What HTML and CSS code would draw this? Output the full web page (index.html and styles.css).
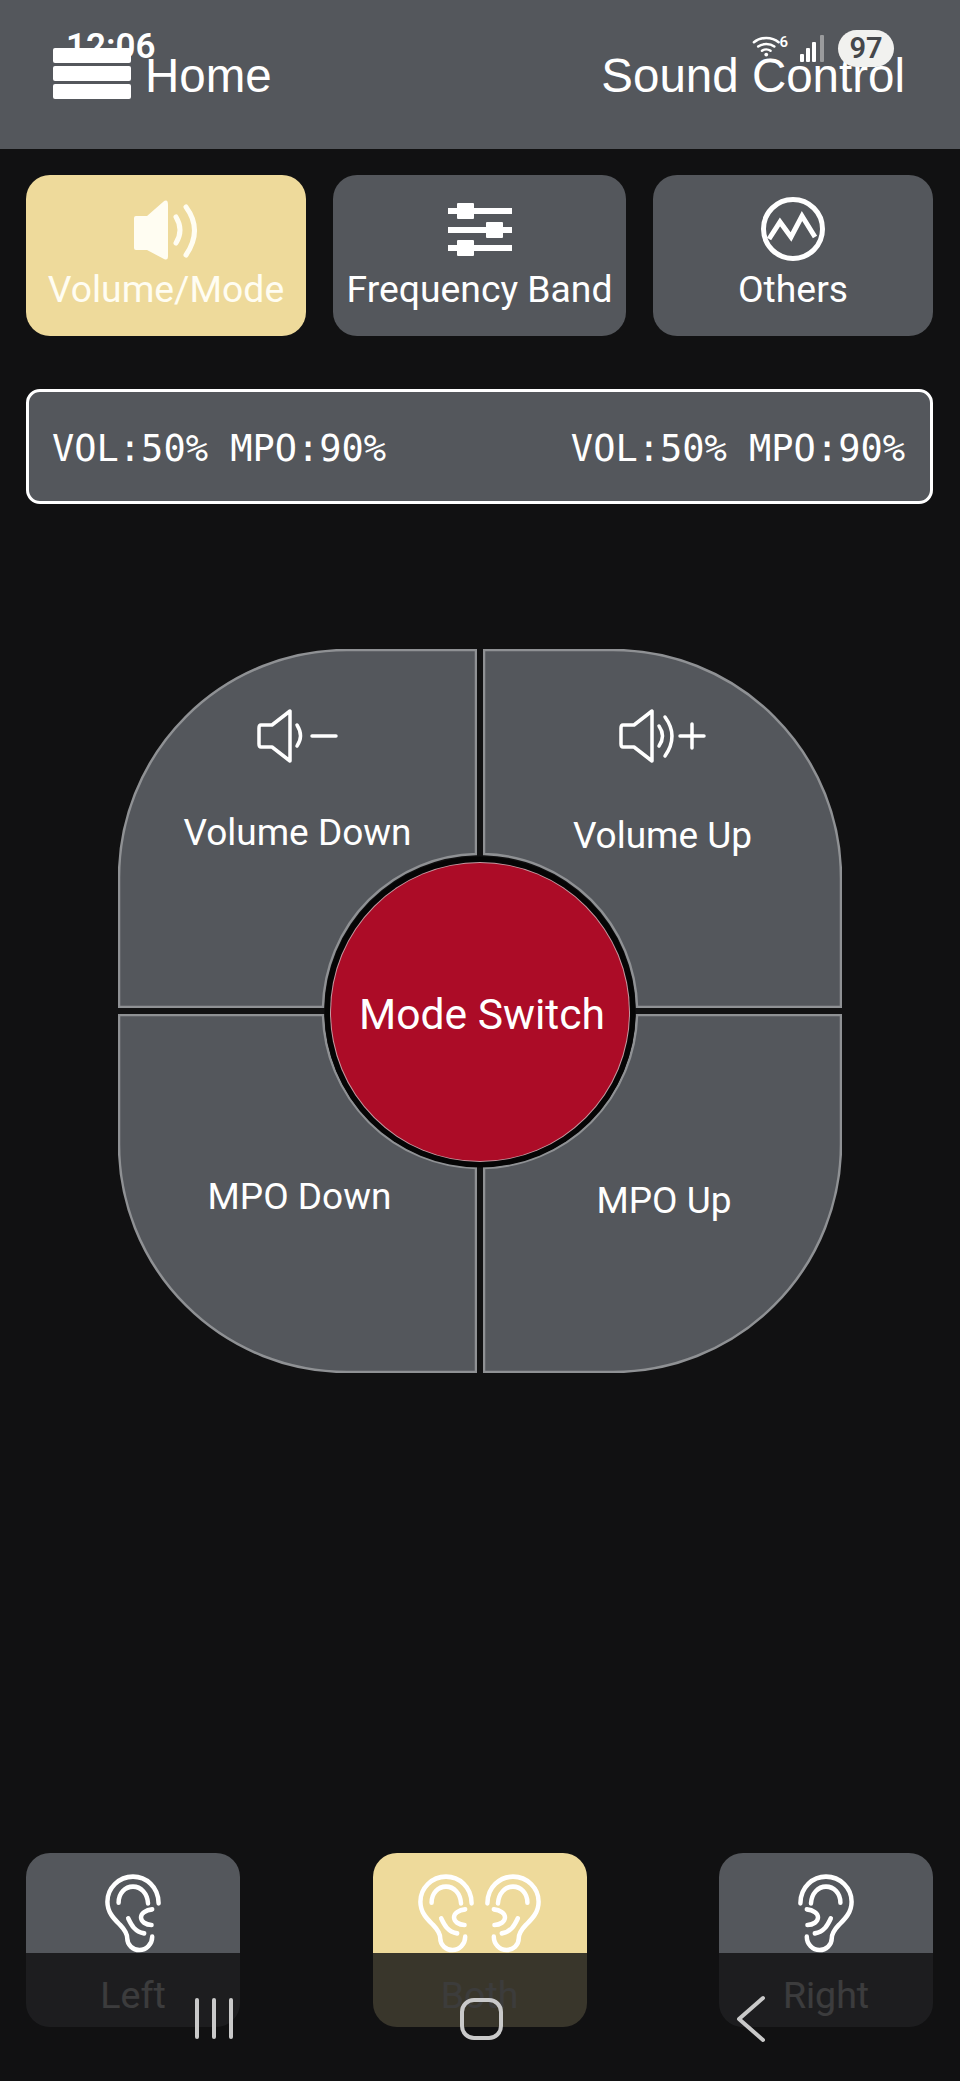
FILE: index.html
```html
<!DOCTYPE html>
<html lang="en">
<head>
<meta charset="utf-8">
<title>Sound Control</title>
<link rel="stylesheet" href="styles.css">
</head>
<body>
<svg class="defs" width="0" height="0" aria-hidden="true">
  <defs>
    <g id="ear" transform="translate(5.200 0) scale(.96 1)">
      <path d="M210 100C210 50 170 20 130 20C85 20 50 55 50 95C50 130 75 150 90 165C105 180 112 190 112 205C112 225 130 240 150 240C172 240 190 222 190 200"/>
      <path d="M85 98C85 70 105 50 130 50C155 50 175 70 177 100"/>
      <path d="M190 118C170 120 155 130 155 142C155 155 170 165 188 165"/>
      <path d="M115 145C125 165 135 185 165 190"/>
    </g>
    <path id="quad" d="M1 358V229A228 228 0 0 1 229 1H358V205A157 157 0 0 0 205 358Z"/>
  </defs>
</svg>

<div class="statusbar">
  <span class="time">12:06</span>
  <div class="status-icons">
    <div class="wifi">
      <svg class="wifi-svg" viewBox="0 0 32 28" width="32" height="28">
        <path d="M2 9C9 3 21 3 28 9M6.500 13.500C11 10 19 10 23.500 13.500M10.500 18C13 16.200 17 16.200 19.500 18"/>
        <circle cx="15" cy="22" r="2"/>
      </svg>
      <span class="wifi-six">6</span>
    </div>
    <svg class="signal" viewBox="0 0 26 27" width="26" height="27">
      <rect x="0" y="19" width="4" height="8" rx="1"/>
      <rect x="6" y="13" width="4" height="14" rx="1"/>
      <rect x="12" y="7" width="4" height="20" rx="1"/>
      <rect class="signal-off" x="20" y="0" width="4" height="27" rx="1"/>
    </svg>
    <span class="battery">97</span>
  </div>
</div>

<header class="appbar">
  <div class="appbar-left">
    <div class="hamburger"><i></i><i></i><i></i></div>
    <span class="appbar-title">Home</span>
  </div>
  <span class="appbar-title">Sound Control</span>
</header>

<main class="content">
  <nav class="tabs">
    <button class="tab tab-a is-active">
      <svg class="tab-icon" viewBox="0 0 70 70" width="70" height="70">
        <path class="solid" d="M5 21Q3 21 3 23V53Q3 55 5 55H16L33 64Q37 66 37 61V10Q37 3 32 7L16 21Z"/>
        <path class="arc" d="M45 22Q53 35 45 48M55 12Q72 35 55 60"/>
      </svg>
      <span class="tab-label">Volume/Mode</span>
    </button>
    <button class="tab tab-b">
      <svg class="tab-icon" viewBox="0 0 70 70" width="70" height="70">
        <rect class="solid" x="3" y="13" width="64" height="6"/>
        <rect class="solid" x="3" y="32" width="64" height="6"/>
        <rect class="solid" x="3" y="50" width="64" height="6"/>
        <rect class="solid" x="12" y="8" width="17" height="16" rx="1"/>
        <rect class="solid" x="41" y="27" width="17" height="16" rx="1"/>
        <rect class="solid" x="12" y="45" width="17" height="16" rx="1"/>
      </svg>
      <span class="tab-label">Frequency Band</span>
    </button>
    <button class="tab tab-a">
      <svg class="tab-icon" viewBox="0 0 70 70" width="70" height="70">
        <circle class="line5" cx="35" cy="34" r="29.500"/>
        <path class="line5" d="M11 44L22 27L33 42L44 21L57 42"/>
      </svg>
      <span class="tab-label">Others</span>
    </button>
  </nav>

  <section class="readout">
    <span>VOL:50% MPO:90%</span>
    <span>VOL:50% MPO:90%</span>
  </section>

  <section class="pad">
    <button class="quad quad-tl">
      <svg class="quad-bg" viewBox="0 0 359 359"><use href="#quad"/></svg>
      <svg class="vol-icon" viewBox="0 0 90 60" width="90" height="60">
        <path class="line3" d="M8 19H19L37 5V55L19 41H8Q6 41 6 38V22Q6 19 8 19Z"/>
        <path class="line3" d="M44 19Q51 30 44 40"/>
        <path class="line3" d="M59 30H83"/>
      </svg>
      <span class="quad-label">Volume Down</span>
    </button>
    <button class="quad quad-tr">
      <svg class="quad-bg" viewBox="0 0 359 359"><use href="#quad"/></svg>
      <svg class="vol-icon" viewBox="0 0 90 60" width="90" height="60">
        <path class="line3" d="M5 19H16L34 5V55L16 41H5Q3 41 3 38V22Q3 19 5 19Z"/>
        <path class="line3" d="M41 20Q48 30 41 40M47 11Q61 30 47 50"/>
        <path class="line3" d="M62 30H86M74 18V42"/>
      </svg>
      <span class="quad-label">Volume Up</span>
    </button>
    <button class="quad quad-bl">
      <svg class="quad-bg" viewBox="0 0 359 359"><use href="#quad"/></svg>
      <span class="quad-label">MPO Down</span>
    </button>
    <button class="quad quad-br">
      <svg class="quad-bg" viewBox="0 0 359 359"><use href="#quad"/></svg>
      <span class="quad-label">MPO Up</span>
    </button>
    <button class="mode">Mode Switch</button>
  </section>

  <section class="ears">
    <button class="ear-btn">
      <svg class="ear" viewBox="40 0 180 270"><use href="#ear"/></svg>
      <span class="ear-label">Left</span>
    </button>
    <button class="ear-btn is-active">
      <span class="ear-pair">
        <svg class="ear" viewBox="40 0 180 270"><use href="#ear"/></svg>
        <svg class="ear ear-flip" viewBox="40 0 180 270"><use href="#ear"/></svg>
      </span>
      <span class="ear-label">Both</span>
    </button>
    <button class="ear-btn">
      <svg class="ear ear-flip" viewBox="40 0 180 270"><use href="#ear"/></svg>
      <span class="ear-label">Right</span>
    </button>
  </section>
</main>

<div class="navbar">
  <span class="nav-recents"><i></i><i></i><i></i></span>
  <span class="nav-home"></span>
  <svg class="nav-back" viewBox="0 0 32 48" width="32" height="48"><path d="M28 3L4 24L28 45"/></svg>
</div>
</body>
</html>
```

FILE: styles.css
```css
* { box-sizing: border-box; }

html, body {
  margin: 0;
  padding: 0;
  height: 2081px;
  overflow: hidden;
  background: #111112;
  color: #fff;
  font-family: Roboto, "Liberation Sans", sans-serif;
}

button {
  border: 0;
  padding: 0;
  margin: 0;
  color: inherit;
  font: inherit;
  background: none;
}

.defs { position: absolute; }

/* System status bar, drawn over the app bar */
.statusbar {
  position: absolute;
  z-index: 1;
  top: 0;
  left: 0;
  width: 960px;
  height: 70px;
  padding: 30px 66px 0 66px;
  display: flex;
  justify-content: space-between;
  align-items: flex-start;
}

.time {
  font-size: 35px;
  font-weight: 600;
  line-height: 34px;
}

.status-icons {
  display: flex;
  align-items: flex-start;
  gap: 12px;
}

.wifi {
  display: flex;
  align-items: flex-start;
  margin-top: 3px;
  width: 36px;
}

.wifi-svg path {
  fill: none;
  stroke: #fff;
  stroke-width: 2.600;
  stroke-linecap: round;
}

.wifi-svg circle { fill: #fff; }

.wifi-six {
  margin-left: -3px;
  margin-top: 1px;
  font-size: 15px;
  font-weight: 600;
  line-height: 16px;
}

.signal {
  margin-top: 5px;
  margin-left: 0;
  fill: #fff;
}

.signal-off { fill: #9a9b9d; }

.battery {
  width: 56px;
  height: 37px;
  border-radius: 19px;
  background: #f1f1ef;
  color: #45474b;
  font-size: 29px;
  font-weight: 600;
  line-height: 37px;
  text-align: center;
}

/* App bar */
.appbar {
  height: 149px;
  padding: 48px 55px 0 53px;
  background: #54575c;
  display: flex;
  justify-content: space-between;
  align-items: flex-start;
}

.appbar-left {
  display: flex;
  align-items: flex-start;
  gap: 14px;
}

.hamburger {
  position: relative;
  z-index: 2;
  width: 78px;
  display: flex;
  flex-direction: column;
  gap: 3px;
}

.hamburger i {
  display: block;
  height: 15px;
  border-radius: 2px;
  background: #fff;
}

.appbar-title {
  font-family: "Liberation Sans", Arial, sans-serif;
  font-size: 47.500px;
  line-height: 55px;
}

/* Content */
.content { padding: 26px 27px 0 26px; }

.tabs {
  display: grid;
  grid-template-columns: 280px 293px 280px;
  gap: 27px;
}

.tab {
  height: 161px;
  padding-top: 20px;
  border-radius: 24px;
  background: #54575c;
  display: flex;
  flex-direction: column;
  align-items: center;
}

.tab.is-active { background: #eeda9b; color: #fffdf2; }

.tab-icon { flex: none; }

.tab-label {
  margin-top: 2px;
  font-size: 37.300px;
  line-height: 44px;
  white-space: nowrap;
}

.solid { fill: currentColor; }

.arc {
  fill: none;
  stroke: currentColor;
  stroke-width: 5;
  stroke-linecap: round;
}

.line5 {
  fill: none;
  stroke: #fff;
  stroke-width: 5;
}

.readout {
  height: 115px;
  margin-top: 53px;
  padding: 5px 25px 0 23px;
  border: 3px solid #fff;
  border-radius: 14px;
  background: #54575c;
  display: flex;
  justify-content: space-between;
  align-items: center;
  font-family: "DejaVu Sans Mono", "Liberation Mono", monospace;
  font-size: 37px;
  line-height: 44px;
}

/* Direction pad */
.pad {
  position: relative;
  width: 724px;
  margin: 145px 0 0 92px;
  display: grid;
  grid-template-columns: 359px 359px;
  grid-template-rows: 359px 359px;
  gap: 6px;
}

.quad {
  position: relative;
  display: flex;
  flex-direction: column;
  align-items: center;
}

.quad-bg {
  position: absolute;
  top: 0;
  left: 0;
  width: 359px;
  height: 359px;
  fill: #54575c;
  stroke: #8f9194;
  stroke-width: 2.500;
}

.quad-tr .quad-bg { transform: scaleX(-1); }
.quad-bl .quad-bg { transform: scaleY(-1); }
.quad-br .quad-bg { transform: scale(-1, -1); }

.vol-icon {
  position: relative;
  flex: none;
  margin-top: 57px;
}

.line3 {
  fill: none;
  stroke: #fff;
  stroke-width: 3.500;
  stroke-linecap: round;
  stroke-linejoin: round;
}

.quad-label {
  position: relative;
  font-size: 37px;
  line-height: 44px;
  white-space: nowrap;
}

.quad-tl .quad-label { margin-top: 45px; }
.quad-tr .quad-label { margin-top: 48px; }
.quad-bl .quad-label { margin: 161px 0 0 4px; }
.quad-br .quad-label { margin: 165px 0 0 3px; }

.mode {
  position: absolute;
  top: 214px;
  left: 212.500px;
  width: 298px;
  height: 298px;
  padding: 3px 0 0 5px;
  border-radius: 50%;
  background: #ac0c27;
  box-shadow: 0 0 0 1px #c49aa2, 0 0 0 6.500px #050505;
  font-size: 42.600px;
  white-space: nowrap;
}

/* Ear selection */
.ears {
  margin-top: 480px;
  display: flex;
  justify-content: space-between;
}

.ear-btn {
  width: 214px;
  height: 174px;
  padding-top: 17px;
  border-radius: 24px;
  background: #54575c;
  display: flex;
  flex-direction: column;
  align-items: center;
}

.ear-btn.is-active { background: #eeda9b; color: #fffdf2; }

.ear {
  display: block;
  flex: none;
  width: 60px;
  height: 90px;
  fill: none;
  stroke: #fff;
  stroke-width: 14;
  stroke-linecap: round;
  stroke-linejoin: round;
}

.ear-flip { transform: scaleX(-1); }

.ear-pair {
  display: flex;
  gap: 7px;
}

.ear-label {
  margin-top: 13px;
  font-size: 37.500px;
  line-height: 44px;
}

/* Translucent system navigation bar over the page */
.navbar {
  position: absolute;
  top: 1953px;
  left: 0;
  width: 960px;
  height: 128px;
  background: rgba(17, 17, 18, 0.82);
}

.nav-recents {
  position: absolute;
  top: 45px;
  left: 195px;
  display: flex;
  gap: 13px;
}

.nav-recents i {
  display: block;
  width: 4px;
  height: 41px;
  border-radius: 2px;
  background: #c9c9c9;
}

.nav-home {
  position: absolute;
  top: 45px;
  left: 460px;
  width: 43px;
  height: 42px;
  border: 4.500px solid #c9c9c9;
  border-radius: 14px;
}

.nav-back {
  position: absolute;
  top: 42px;
  left: 735px;
  fill: none;
  stroke: #c9c9c9;
  stroke-width: 4;
  stroke-linecap: round;
  stroke-linejoin: round;
}
```
